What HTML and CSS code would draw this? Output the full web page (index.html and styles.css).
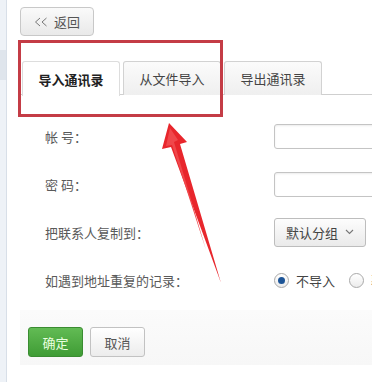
FILE: index.html
```html
<!DOCTYPE html>
<html lang="zh-CN">

<head>
    <meta charset="UTF-8">
    <title>导入通讯录</title>
    <link rel="stylesheet" href="styles.css">
</head>

<body>

    <div class="page">
        <div class="sidebar">
            <div class="sidebar-item"></div>
        </div>

        <div class="main">
            <button class="back-btn">
                <svg class="chev" width="14" height="10" viewBox="0 0 14 10">
                    <path d="M6 1 L1.5 5 L6 9 M12.5 1 L8 5 L12.5 9" fill="none" stroke="#777" stroke-width="1"/>
                </svg>
                <span>返回</span>
            </button>

            <!-- Tabs -->
            <div class="tabs">
                <div class="tab active">导入通讯录</div>
                <div class="tab">从文件导入</div>
                <div class="tab">导出通讯录</div>
            </div>

            <!-- Form -->
            <div class="form">
                <div class="row">
                    <div class="label">帐 号：</div>
                    <div class="field"><input class="text-input" type="text"></div>
                </div>
                <div class="row">
                    <div class="label">密 码：</div>
                    <div class="field"><input class="text-input" type="password"></div>
                </div>
                <div class="row">
                    <div class="label">把联系人复制到：</div>
                    <div class="field">
                        <div class="select-btn">默认分组
                            <svg width="9" height="6" viewBox="0 0 9 6">
                                <path d="M1 1 L4.5 4.5 L8 1" fill="none" stroke="#777" stroke-width="1.1"/>
                            </svg>
                        </div>
                    </div>
                </div>
                <div class="row">
                    <div class="label">如遇到地址重复的记录：</div>
                    <div class="field radios">
                        <span class="radio checked"></span><span class="radio-text">不导入</span>
                        <span class="radio"></span><span class="radio-text">覆盖</span>
                    </div>
                </div>
            </div>

            <div class="footer">
                <button class="btn btn-ok">确定</button>
                <button class="btn btn-cancel">取消</button>
            </div>
        </div>
    </div>

    <!-- annotation overlays -->
    <div class="mark-box"></div>
    <svg class="mark-arrow" width="372" height="382" viewBox="0 0 372 382">
        <polygon points="169,123 187,142 180,144 221,283 171,147 162,149" fill="#e8262c"/>
        <polygon points="170,128 178,140 174,142 206,250 172,145 166,146" fill="#f0474b"/>
    </svg>

</body>

</html>
```

FILE: styles.css
```css
html,
body {
    margin: 0;
    overflow: hidden;
}

body {
    background: #fff;
    font-family: "Noto Sans CJK SC", "Noto Sans", sans-serif;
    font-size: 13px;
    color: #555;
    width: 372px;
    height: 382px;
    position: relative;
}

.page {
    display: flex;
    height: 382px;
}

/* Left strip */
.sidebar {
    width: 6px;
    flex-shrink: 0;
    background: #eef2f7;
    border-right: 1px solid #d8dfe8;
    padding-top: 50px;
}

.sidebar-item {
    height: 30px;
    background: #dfe5ec;
}

.main {
    flex: 1;
    padding-left: 13px;
    overflow: hidden;
}

/* Back button */
.back-btn {
    margin-top: 7px;
    width: 74px;
    height: 29px;
    border: 1px solid #c8c8c8;
    border-radius: 4px;
    background: linear-gradient(#fafafa, #e9e9e9);
    font-family: inherit;
    font-size: 13px;
    color: #555;
    padding: 0;
    display: flex;
    align-items: center;
    justify-content: center;
    gap: 6px;
}

/* Tabs */
.tabs {
    display: flex;
    gap: 3px;
    margin-top: 25px;
    padding-left: 2px;
    border-bottom: 1px solid #cfcfcf;
    height: 33px;
}

.tab {
    width: 96px;
    height: 33px;
    border: 1px solid #d2d2d2;
    border-bottom: none;
    border-radius: 3px 3px 0 0;
    background: linear-gradient(#fbfbfb, #efefef);
    display: flex;
    justify-content: center;
    align-items: center;
    color: #444;
    font-size: 13px;
}

.tab.active {
    background: #fff;
    height: 34px;
    font-weight: bold;
    color: #222;
    border-color: #ddd;
}

/* Form */
.form {
    margin-top: 17px;
    padding-left: 25px;
}

.row {
    display: flex;
    align-items: center;
    height: 48px;
}

.label {
    width: 229px;
    flex-shrink: 0;
    color: #5a5a5a;
}

.field {
    display: flex;
    align-items: center;
    white-space: nowrap;
}

.text-input {
    width: 150px;
    height: 23px;
    border: 1px solid #c4c4c4;
    border-radius: 3px;
    box-shadow: inset 0 1px 2px rgba(0, 0, 0, 0.08);
    padding: 0 4px;
    margin: 0;
}

.select-btn {
    width: 90px;
    height: 27px;
    border: 1px solid #bdbdbd;
    border-radius: 3px;
    background: linear-gradient(#fdfdfd, #eaeaea);
    display: flex;
    align-items: center;
    justify-content: center;
    gap: 7px;
    color: #444;
}

.radio {
    width: 13px;
    height: 13px;
    border: 1px solid #a9a9a9;
    border-radius: 50%;
    background: linear-gradient(#fff, #ececec);
    position: relative;
    flex-shrink: 0;
}

.radio.checked::after {
    content: "";
    position: absolute;
    left: 3px;
    top: 3px;
    width: 7px;
    height: 7px;
    border-radius: 50%;
    background: #1d5597;
}

.radio-text {
    margin-left: 7px;
    margin-right: 14px;
    color: #444;
}

/* Footer with buttons */
.footer {
    margin-top: 6px;
    background: linear-gradient(#fbfbfb, #f7f7f7);
    padding: 17px 0 8px 8px;
    display: flex;
    gap: 7px;
}

.btn {
    width: 55px;
    height: 30px;
    border-radius: 3px;
    font-family: inherit;
    font-size: 13px;
    padding: 0;
}

.btn-ok {
    background: linear-gradient(#62bb54, #3f9c35);
    border: 1px solid #3a8c31;
    color: #eaffdf;
}

.btn-cancel {
    background: linear-gradient(#fff, #ececec);
    border: 1px solid #c2c2c2;
    color: #555;
}

/* Annotation overlays */
.mark-box {
    position: absolute;
    left: 18px;
    top: 40px;
    width: 199px;
    height: 71px;
    border: 3px solid #c43c46;
}

.mark-arrow {
    position: absolute;
    left: 0;
    top: 0;
    pointer-events: none;
}
```
